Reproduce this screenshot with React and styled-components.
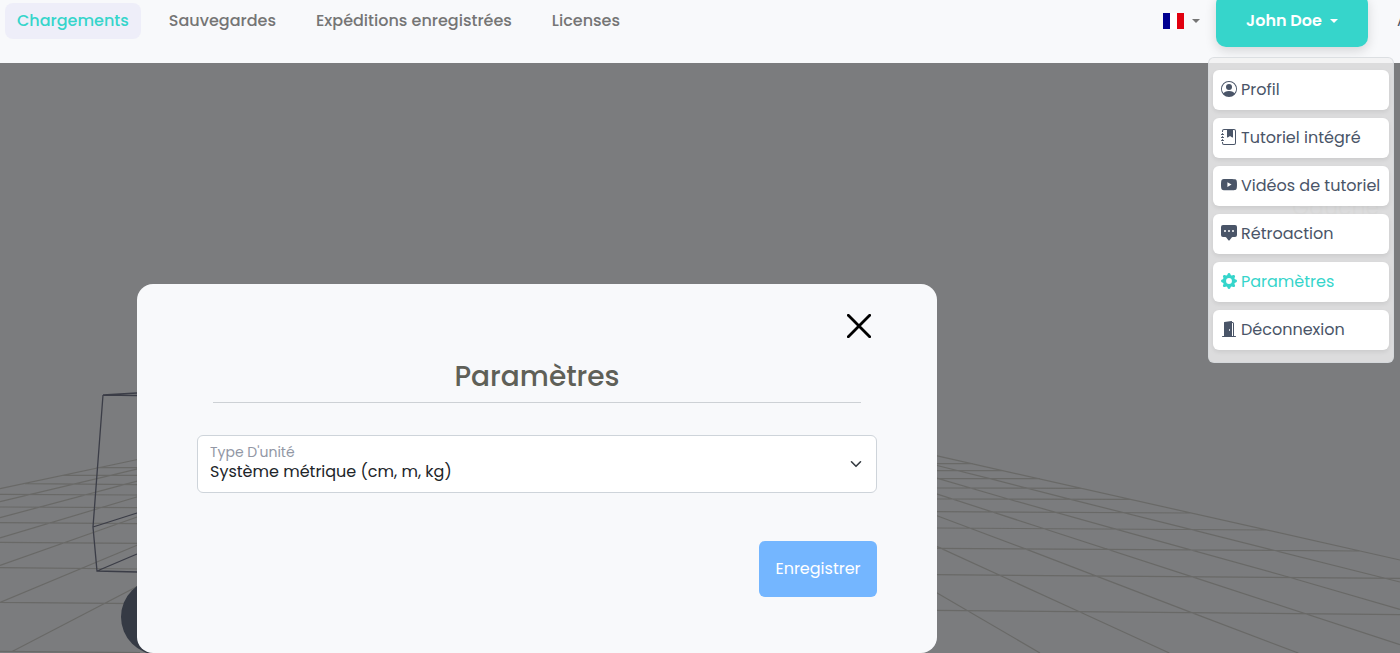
import React from "react";
import styled, { createGlobalStyle } from "styled-components";
import {
  BsPersonCircle,
  BsJournalBookmarkFill,
  BsYoutube,
  BsChatSquareDotsFill,
  BsGearFill,
  BsDoorOpenFill,
} from "react-icons/bs";

const GlobalStyle = createGlobalStyle`
  * { box-sizing: border-box; }
  body { margin: 0; }
  body, button, select { font-family: Poppins, Inter, "Open Sans", sans-serif; }
`;

const Page = styled.div`
  position: relative;
  min-height: 100vh;
  overflow: hidden;
  background: #7b7c7e;
`;

const Scene = styled.svg`
  position: absolute;
  inset: 0;
  width: 100%;
  height: 100%;
`;

const Header = styled.header`
  position: relative;
  z-index: 2;
  display: flex;
  justify-content: space-between;
  align-items: center;
  margin-top: -6px;
  padding: 0 0 16px 5px;
  background: #f8f9fb;
`;

const Nav = styled.nav`
  display: flex;
  gap: 16px;
`;

const NavLink = styled.a`
  padding: 6px 12px;
  border-radius: 8px;
  font-size: 16px;
  line-height: 24px;
  white-space: nowrap;
  text-decoration: none;
  font-weight: 500;
  color: ${(p) => (p.$active ? "#36d5cb" : "#757575")};
  background: ${(p) => (p.$active ? "#eeeef9" : "transparent")};
`;

const Tools = styled.div`
  display: flex;
  align-items: center;
`;

const LanguageButton = styled.button`
  display: flex;
  align-items: center;
  gap: 8px;
  margin-right: 16px;
  padding: 0;
  border: 0;
  background: none;
  color: #757575;
`;

const Caret = styled.span`
  border: 4px solid transparent;
  border-top-color: currentColor;
  border-bottom: 0;
`;

const Account = styled.div`
  position: relative;
  margin-right: 29px;
`;

const AccountButton = styled.button`
  display: flex;
  align-items: center;
  justify-content: center;
  gap: 8px;
  width: 152px;
  height: 53px;
  border: 0;
  border-radius: 10px;
  background: #36d5cb;
  box-shadow: 0 4px 12px rgba(0, 0, 0, 0.14);
  color: #fff;
  font-size: 16px;
  font-weight: 600;
`;

const ClippedLink = styled.a`
  width: 3px;
  overflow: hidden;
  color: #4a5568;
  font-size: 16px;
  line-height: 24px;
  text-decoration: none;
`;

const Menu = styled.ul`
  position: absolute;
  top: 63px;
  right: -26px;
  display: flex;
  flex-direction: column;
  gap: 8px;
  width: 186px;
  margin: 0;
  padding: 12px 4px;
  list-style: none;
  border: 1px solid rgba(210, 214, 218, 0.7);
  border-radius: 6px;
  background: rgba(241, 241, 241, 0.82);
`;

const MenuLink = styled.a`
  display: flex;
  align-items: center;
  gap: 4px;
  height: 40px;
  padding: 0 8px 2px;
  border-radius: 6px;
  background: #fff;
  box-shadow: 0 2px 4px rgba(0, 0, 0, 0.08);
  color: ${(p) => (p.$active ? "#36d5cb" : "#4a5568")};
  font-size: 16px;
  white-space: nowrap;
  text-decoration: none;

  svg {
    flex: none;
  }
`;

const Main = styled.main`
  position: relative;
  padding: 221px 24px 0 137px;
`;

const Dialog = styled.section`
  display: flex;
  flex-direction: column;
  max-width: 800px;
  padding: 24px 60px 56px;
  border-radius: 16px;
  background: #f8f9fb;
`;

const CloseButton = styled.button`
  display: flex;
  align-self: flex-end;
  padding: 6px;
  border: 0;
  background: none;
`;

const Title = styled.h1`
  margin: 16px 16px 32px;
  padding-bottom: 8px;
  border-bottom: 1px solid #cdd1d5;
  color: #5f6058;
  font-size: 28px;
  line-height: 34px;
  font-weight: 500;
  text-align: center;
`;

const Field = styled.div`
  position: relative;
`;

const FieldLabel = styled.label`
  position: absolute;
  top: 9px;
  left: 13px;
  color: #9297a5;
  font-size: 14px;
  line-height: 16px;
`;

const Select = styled.select`
  display: block;
  width: 100%;
  height: 58px;
  padding: 14px 36px 0 12px;
  border: 1px solid #ced4da;
  border-radius: 6px;
  appearance: none;
  background: #fff;
  color: #212529;
  font-size: 16px;
`;

const Chevron = styled.svg`
  position: absolute;
  top: 23px;
  right: 15px;
  pointer-events: none;
`;

const SaveButton = styled.button`
  align-self: flex-end;
  width: 118px;
  height: 56px;
  margin-top: 48px;
  padding: 0 0 2px;
  border: 0;
  border-radius: 6px;
  background: #74b6ff;
  color: #fff;
  font-size: 16px;
`;

const NAV = ["Chargements", "Sauvegardes", "Expéditions enregistrées", "Licenses"];

const MENU = [
  [BsPersonCircle, "Profil"],
  [BsJournalBookmarkFill, "Tutoriel intégré"],
  [BsYoutube, "Vidéos de tutoriel"],
  [BsChatSquareDotsFill, "Rétroaction"],
  [BsGearFill, "Paramètres"],
  [BsDoorOpenFill, "Déconnexion"],
];

function Background() {
  return (
    <Scene viewBox="0 0 1400 653" preserveAspectRatio="xMinYMin slice" aria-hidden="true">
      <g fill="none" stroke="#696967" strokeWidth="3.6">
        <path
          transform="translate(0 380) scale(0.33333)"
          d="M0 326L420 237M0 365L420 265M0 413L420 301M0 474L420 348M0 556L420 408M0 667L420 492M35 815L420 615
             M290 263H420M190 286H420M75 311L420 314M0 343L420 345M0 381L420 383M0 428L420 431M0 487L420 490M0 563L420 567M0 667L420 671M0 814L420 818"
        />
        <path
          transform="translate(930 440) scale(0.33333)"
          d="M15 46L1410 360M15 75L180 116L425 179L785 269L1410 426M15 113L245 180L560 268L1075 411L1410 508
             M15 160L345 267L785 410L1410 614M15 225L290 328L785 518L1105 639M15 317L450 516L718 639M15 455L330 639
             M15 71H128M15 92H220M15 116H330M15 144L455 145M15 177L600 178M15 215L785 219M15 264L1012 270M15 325L1292 333M15 404L1410 415M15 511L1410 524"
        />
      </g>
      <path
        d="M137 393L103 395L137 395.500M103 395L93 527L97 571L137 572M93 527L137 513M97 571L137 554"
        fill="none"
        stroke="#3b3d47"
        strokeWidth="1.3"
      />
      <circle cx="159" cy="617" r="38" fill="#353a44" />
      <text x="1292" y="215" fontFamily="Poppins, Inter, sans-serif" fontSize="22" fill="#686a6c">
        Gauche
      </text>
    </Scene>
  );
}

export default function App() {
  return (
    <Page>
      <GlobalStyle />
      <Background />
      <Header>
        <Nav aria-label="Navigation principale">
          {NAV.map((name, i) => (
            <NavLink href="#" key={name} $active={i === 0}>
              {name}
            </NavLink>
          ))}
        </Nav>
        <Tools>
          <LanguageButton type="button" aria-label="Langue">
            <svg width="21" height="16" viewBox="0 0 21 16" shapeRendering="crispEdges">
              <path fill="#000091" d="M0 0h7v16H0z" />
              <path fill="#fff" d="M7 0h7v16H7z" />
              <path fill="#e1000f" d="M14 0h7v16h-7z" />
            </svg>
            <Caret />
          </LanguageButton>
          <Account>
            <AccountButton type="button" aria-expanded="true">
              John Doe
              <Caret />
            </AccountButton>
            <Menu>
              {MENU.map(([Icon, name]) => (
                <li key={name}>
                  <MenuLink href="#" $active={name === "Paramètres"}>
                    <Icon size={16} />
                    {name}
                  </MenuLink>
                </li>
              ))}
            </Menu>
          </Account>
          <ClippedLink href="#">A</ClippedLink>
        </Tools>
      </Header>
      <Main>
        <Dialog role="dialog" aria-labelledby="settings-title">
          <CloseButton type="button" aria-label="Fermer">
            <svg width="24" height="24" viewBox="0 0 24 24" stroke="#000" strokeWidth="2.8" strokeLinecap="round">
              <path d="M1.300 1.300L22.700 22.700M22.700 1.300L1.300 22.700" />
            </svg>
          </CloseButton>
          <Title id="settings-title">Paramètres</Title>
          <Field>
            <Select id="unit-type" defaultValue="metric">
              <option value="metric">Système métrique (cm, m, kg)</option>
            </Select>
            <FieldLabel htmlFor="unit-type">Type D'unité</FieldLabel>
            <Chevron width="12" height="12" viewBox="0 0 12 12" fill="none" stroke="#343a40" strokeWidth="1.6" strokeLinecap="round" strokeLinejoin="round">
              <path d="M1.500 3.800L6 8.300L10.500 3.800" />
            </Chevron>
          </Field>
          <SaveButton type="button">Enregistrer</SaveButton>
        </Dialog>
      </Main>
    </Page>
  );
}
